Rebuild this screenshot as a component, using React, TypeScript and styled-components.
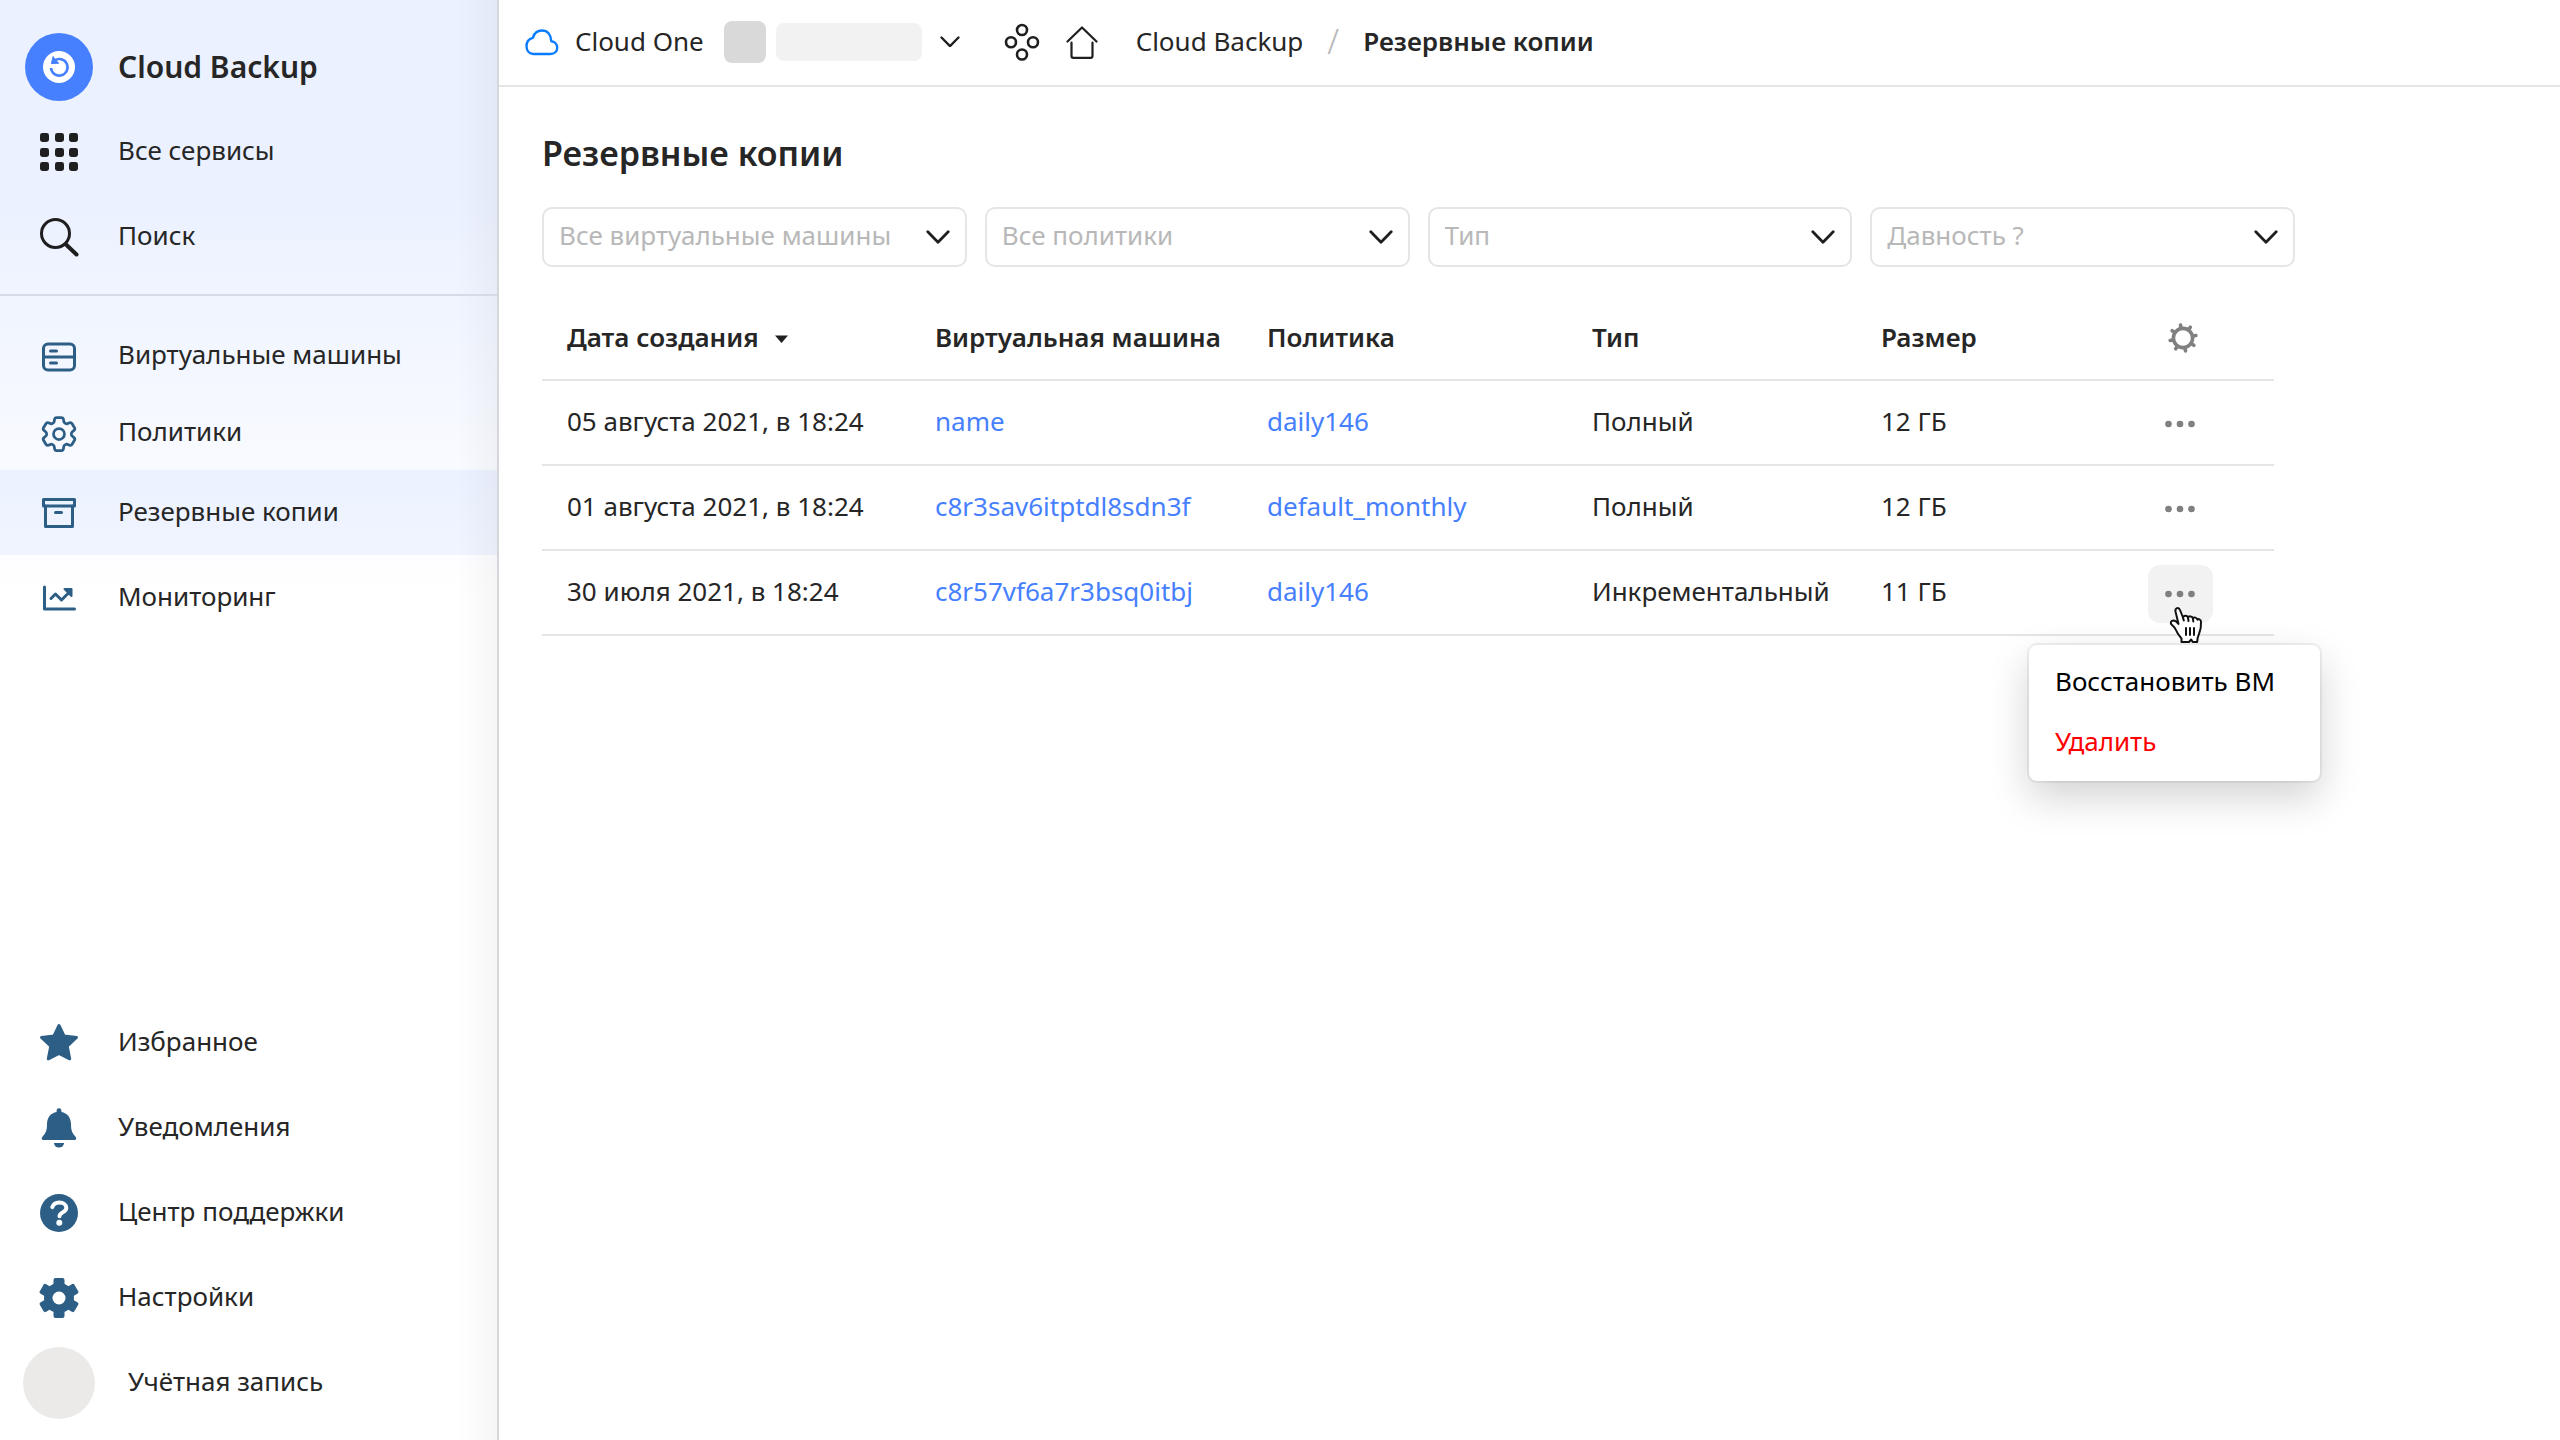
import React, { useState } from "react";
import styled, { createGlobalStyle, css } from "styled-components";
import { HiOutlineCog6Tooth } from "react-icons/hi2";

const color = {
  text: "#262626",
  strong: "#1f1f1f",
  steel: "#2d5f86",
  brand: "#4680ff",
  line: "#e5e5e5",
  muted: "#b8b8b8",
  gray: "#808080",
  danger: "#ff0000",
};

const GlobalStyle = createGlobalStyle`
  *, *::before, *::after { box-sizing: border-box; }
  body {
    margin: 0;
    background: #fff;
    color: ${color.text};
    font-family: "Noto Sans", "Open Sans", "Liberation Sans", sans-serif;
    font-size: 26px;
    line-height: 36px;
  }
  button, select { font: inherit; color: inherit; }
  svg { display: block; flex: none; }
`;

const Page = styled.div`
  display: flex;
  min-height: 100vh;
`;

/* Sidebar */

const Sidebar = styled.aside`
  display: flex;
  flex-direction: column;
  flex: none;
  width: 499px;
  border-right: 2px solid #d6d7db;
  background:
    linear-gradient(to left, rgba(0, 0, 0, 0.035), rgba(0, 0, 0, 0) 40px),
    linear-gradient(#ebf1ff 0, #ebf1ff 200px, #ffffff 600px);
`;

const SidebarGroup = styled.nav<{ $kind: "top" | "main" | "bottom" }>`
  display: flex;
  flex-direction: column;
  ${(p) => p.$kind === "top" && css`
    padding: 24px 0 15px;
    border-bottom: 2px solid #d5dae6;
  `}
  ${(p) => p.$kind === "main" && css`
    padding-top: 20px;
  `}
  ${(p) => p.$kind === "bottom" && css`
    margin-top: auto;
    padding-bottom: 15px;
  `}
`;

const NavItem = styled.a<{ $active?: boolean; $compact?: boolean }>`
  display: flex;
  align-items: center;
  height: ${(p) => (p.$compact ? 77 : 85)}px;
  color: ${color.text};
  text-decoration: none;
  background: ${(p) => (p.$active ? "rgba(70, 128, 255, 0.07)" : "none")};
`;

const NavLabel = styled.span<{ $compact?: boolean }>`
  padding-bottom: ${(p) => (p.$compact ? 1 : 4)}px;
`;

const IconSlot = styled.span<{ $wide?: boolean; $low?: boolean }>`
  display: flex;
  justify-content: center;
  flex: none;
  width: ${(p) => (p.$wide ? 128 : 118)}px;
  padding-right: ${(p) => (p.$wide ? 10 : 0)}px;
  padding-top: ${(p) => (p.$low ? 4 : 0)}px;
  color: ${color.steel};
`;

const Brand = styled.span`
  font-size: 30px;
  font-weight: 600;
  color: ${color.text};
`;

const Avatar = styled.span`
  width: 72px;
  height: 72px;
  border-radius: 50%;
  background: #ebeae9;
`;

/* Header */

const Main = styled.div`
  display: flex;
  flex-direction: column;
  flex: 1;
  min-width: 0;
`;

const Header = styled.header`
  display: flex;
  align-items: center;
  height: 87px;
  padding: 0 26px 2px;
  border-bottom: 2px solid ${color.line};
`;

const CloudLink = styled.a`
  display: flex;
  align-items: center;
  gap: 16px;
  color: ${color.text};
  text-decoration: none;
`;

const HeaderLabel = styled.span`
  padding-bottom: 2px;
`;

const FolderPicker = styled.button`
  display: flex;
  align-items: center;
  gap: 10px;
  margin-left: 20px;
  padding: 0;
  border: 0;
  background: none;
  cursor: pointer;
`;

const FolderBadge = styled.span`
  width: 42px;
  height: 42px;
  border-radius: 8px;
  background: #d9d9d9;
`;

const FolderName = styled.span`
  width: 146px;
  height: 38px;
  margin-right: 8px;
  border-radius: 8px;
  background: #f2f2f2;
`;

const HeaderIcons = styled.div`
  display: flex;
  align-items: center;
  gap: 26px;
  margin-left: 44px;
`;

const IconButton = styled.button`
  display: flex;
  padding: 0;
  border: 0;
  background: none;
  cursor: pointer;
`;

const Breadcrumbs = styled.nav`
  display: flex;
  align-items: center;
  gap: 24px;
  margin-left: 38px;
  padding-bottom: 2px;
`;

const Crumb = styled.a<{ $current?: boolean }>`
  color: ${color.text};
  font-weight: ${(p) => (p.$current ? 600 : 400)};
  text-decoration: none;
`;

const Slash = styled.span`
  font-size: 34px;
  font-weight: 300;
  color: ${color.muted};
`;

/* Content */

const Content = styled.main`
  padding: 42px 43px;
`;

const Title = styled.h1`
  margin: 0;
  font-size: 34px;
  line-height: 48px;
  font-weight: 600;
`;

const Filters = styled.form`
  display: grid;
  grid-template-columns: repeat(4, 1fr);
  gap: 18px;
  max-width: 1753px;
  margin-top: 30px;
`;

const Field = styled.label`
  display: grid;
  align-items: center;
  > * { grid-area: 1 / 1; }
`;

const Select = styled.select`
  width: 100%;
  height: 60px;
  padding: 0 50px 4px 15px;
  border: 2px solid ${color.line};
  border-radius: 10px;
  background: #fff;
  color: ${color.muted};
  appearance: none;
`;

const SelectArrow = styled.span`
  justify-self: end;
  margin-right: 17px;
  pointer-events: none;
`;

const Table = styled.table`
  width: 100%;
  max-width: 1732px;
  margin-top: 27px;
  border-collapse: collapse;
  table-layout: fixed;
`;

const Row = styled.tr`
  height: 85px;
  border-bottom: 2px solid ${color.line};
`;

const HeadCell = styled.th<{ $action?: boolean }>`
  height: 86px;
  padding: ${(p) => (p.$action ? 2 : 0)}px 0 0 25px;
  font-weight: 600;
  text-align: left;
  white-space: nowrap;
`;

const Cell = styled.td<{ $action?: boolean }>`
  padding: ${(p) => (p.$action ? "2px 0 0 25px" : "0 0 4px 25px")};
  white-space: nowrap;
`;

const SortButton = styled.button`
  display: flex;
  align-items: center;
  gap: 16px;
  padding: 0;
  border: 0;
  background: none;
  cursor: pointer;
`;

const TableLink = styled.a`
  color: ${color.brand};
  text-decoration: none;
`;

const Actions = styled.div`
  position: relative;
  width: 65px;
`;

const ActionButton = styled.button<{ $open?: boolean; $wide?: boolean }>`
  display: flex;
  align-items: center;
  justify-content: center;
  width: ${(p) => (p.$wide ? 70 : 65)}px;
  height: 58px;
  padding: 0;
  border: 0;
  border-radius: 12px;
  background: ${(p) => (p.$open ? "#f2f2f2" : "none")};
  color: ${color.gray};
  cursor: pointer;
`;

const Menu = styled.div`
  position: absolute;
  z-index: 1;
  top: 80px;
  right: -107px;
  display: flex;
  flex-direction: column;
  width: 291px;
  padding: 8px 0;
  border-radius: 8px;
  background: #fff;
  box-shadow: 0 0 0 2px rgba(0, 0, 0, 0.06), 0 16px 40px rgba(0, 0, 0, 0.18);
`;

const MenuItem = styled.button<{ $danger?: boolean }>`
  height: 60px;
  padding: 0 26px 4px;
  border: 0;
  background: none;
  color: ${(p) => (p.$danger ? color.danger : "#000")};
  text-align: left;
  cursor: pointer;
`;

const Pointer = styled.span`
  position: absolute;
  z-index: 2;
  top: 41px;
  left: 21px;
  pointer-events: none;
`;

/* Icons */

const BackupLogo = () => (
  <svg width="68" height="68" viewBox="0 0 68 68">
    <circle cx="34" cy="34" r="34" fill={color.brand} />
    <circle cx="34" cy="34" r="16" fill="#fff" />
    <path d="M26 35a8.3 8.3 0 1 0 3.4-7.4" fill="none" stroke={color.brand} strokeWidth="2.6" />
    <path d="M28.2 23.2 26.4 30.6 34 30.2" fill={color.brand} stroke={color.brand} strokeWidth="1" strokeLinejoin="round" />
  </svg>
);

const GridIcon = () => (
  <svg width="40" height="40" viewBox="0 0 40 40" fill={color.strong}>
    {[1, 16, 30].map((y) => [1, 16, 30].map((x) => (
      <rect key={`${x}-${y}`} x={x} y={y} width="9" height="9" rx="2.4" />
    )))}
  </svg>
);

const SearchIcon = () => (
  <svg width="40" height="40" viewBox="0 0 40 40" fill="none" stroke={color.strong} strokeWidth="3" strokeLinecap="round">
    <circle cx="16.5" cy="16.5" r="14" />
    <path d="M27 27.5 37.5 37.5" strokeWidth="4" />
  </svg>
);

const ServerIcon = () => (
  <svg width="36" height="32" viewBox="0 0 36 32" fill="none" stroke="currentColor" strokeWidth="3" strokeLinecap="round">
    <rect x="2.5" y="3" width="31" height="26" rx="4.5" />
    <path d="M2.5 16h31M9.5 10h6M9.5 22h6" />
  </svg>
);

const ArchiveIcon = () => (
  <svg width="36" height="32" viewBox="0 0 36 32" fill="none" stroke="currentColor" strokeWidth="3" strokeLinejoin="round" strokeLinecap="round">
    <rect x="2.5" y="2.5" width="31" height="6.5" />
    <path d="M4.5 9v20.5h27V9M14.500 15.500h6" />
  </svg>
);

const ChartIcon = () => (
  <svg width="36" height="30" viewBox="0 0 36 30" fill="none" stroke="currentColor" strokeWidth="3" strokeLinejoin="round" strokeLinecap="round">
    <path d="M3.500 4v22h30" />
    <path d="M10 15.500l4.500-4.500 6 6 8-8" />
    <path d="M23.500 6h7v7z" fill="currentColor" strokeWidth="2" />
  </svg>
);

const StarIcon = () => (
  <svg width="40" height="40" viewBox="0 0 40 40" fill="currentColor" stroke="currentColor" strokeWidth="3" strokeLinejoin="round">
    <path d="M20 2.500l5 10.500 12.500 1.500-9.300 8.600 2.500 12.700L20 30.300 9.300 35.800l2.500-12.700L2.500 14.500 15 13z" />
  </svg>
);

const BellIcon = () => (
  <svg width="40" height="40" viewBox="0 0 40 40" fill="currentColor">
    <path d="M17.600 2.600a2.400 2.400 0 0 1 4.800 0v1.300C28.300 5 32 9.600 32 16c0 7 1.600 9.600 4.300 12.400C38 30.200 37.300 32 35 32H5c-2.300 0-3-1.800-1.300-3.600C6.400 25.600 8 23 8 16 8 9.600 11.700 5 17.600 3.900z" />
    <path d="M15 35h10a5 4.500 0 0 1-10 0z" />
  </svg>
);

const HelpIcon = () => (
  <svg width="38" height="38" viewBox="0 0 38 38" fill="none">
    <circle cx="19" cy="19" r="19" fill="currentColor" />
    <path d="M12.300 13.200c1-3 3.500-4.700 7-4.700 4 0 7 2.200 7 5.400 0 4.600-6.800 4.300-6.800 8.300" stroke="#fff" strokeWidth="4" strokeLinecap="round" />
    <circle cx="19.300" cy="28.700" r="3" fill="#fff" />
  </svg>
);

const GearIcon = () => (
  <svg width="40" height="40" viewBox="-20 -20 40 40" fill="currentColor">
    <mask id="gear-hole">
      <rect x="-20" y="-20" width="40" height="40" fill="#fff" />
      <circle r="6.5" fill="#000" />
    </mask>
    <g mask="url(#gear-hole)">
      <circle r="15" />
      {[0, 60, 120].map((a) => (
        <rect key={a} x="-5.5" y="-20" width="11" height="40" rx="2" transform={`rotate(${a})`} />
      ))}
    </g>
  </svg>
);

const CloudIcon = () => (
  <svg width="34" height="28" viewBox="0 0 34 28" fill="none" stroke="#0a7cff" strokeWidth="2.4" strokeLinejoin="round">
    <path d="M8.500 26h17c4 0 6.700-2.700 6.700-6.200 0-3.600-2.500-6.100-5.900-6.500C26 6.500 22.300 2.500 17 2.500c-4.500 0-7.700 2.500-9.200 7.300C4.200 10.700 1.500 13.700 1.500 18c0 4.700 2.900 8 7 8z" />
  </svg>
);

const Chevron = ({ width }: { width: number }) => (
  <svg width={width} viewBox="0 0 24 14" fill="none" stroke={color.strong} strokeWidth="2.8" strokeLinecap="round" strokeLinejoin="round">
    <path d="M1.800 1.800 12 12.200 22.200 1.800" />
  </svg>
);

const ServicesIcon = () => (
  <svg width="36" height="38" viewBox="0 0 36 38" fill="none" stroke={color.strong} strokeWidth="2.6">
    <circle cx="18" cy="7" r="5" />
    <circle cx="18" cy="31.500" r="5" />
    <circle cx="7" cy="19.300" r="5" />
    <circle cx="29" cy="19.300" r="5" />
  </svg>
);

const HomeIcon = () => (
  <svg width="32" height="34" viewBox="0 0 32 34" fill="none" stroke={color.strong} strokeWidth="2.2" strokeLinecap="round" strokeLinejoin="round">
    <path d="M1.500 16.500 16 2.500l14.500 14" />
    <path d="M5.500 17.500V31c0 1 .8 1.800 1.800 1.800h17.400c1 0 1.800-.8 1.800-1.800V17.500" />
  </svg>
);

const SortIcon = () => (
  <svg width="13" height="12" viewBox="0 0 13 12" fill={color.strong}>
    <path d="M0 4.500h13L6.500 12z" />
  </svg>
);

const SunGearIcon = () => (
  <svg width="30" height="30" viewBox="-15 -15 30 30" fill="none" stroke={color.gray} strokeWidth="3.6" strokeLinecap="round">
    <circle r="9.600" />
    {[0, 45, 90, 135, 180, 225, 270, 315].map((a) => (
      <path key={a} d="M0-10.500v-2.600" transform={`rotate(${a - 11})`} />
    ))}
  </svg>
);

const DotsIcon = () => (
  <svg width="32" height="8" viewBox="0 0 32 8" fill="currentColor">
    <circle cx="3.500" cy="4" r="3.300" />
    <circle cx="15" cy="4" r="3.300" />
    <circle cx="26.500" cy="4" r="3.300" />
  </svg>
);

const HandIcon = () => (
  <svg width="34" height="38" viewBox="0 0 34 38" fill="#fff" stroke="#111" strokeWidth="2" strokeLinejoin="round" strokeLinecap="round">
    <path d="M12.500 36v-3.500c-2-2.500-4-4.500-5-7.500-1-2.500-2.500-4.500-5-6.500-1.500-1.500-.5-4 2-4 2 0 3.500 1.500 5 3.500L6.500 5.500C5.800 2 9.800.5 11 4l3 7.500c.5-2.500 4.500-2.500 5 .2.800-2 4.300-1.700 4.800.6 1-1.500 4-.8 4.700 1.500.8-1.300 3.300-.5 3.500 1.700.3 5-.5 9-2 12.500-1 2.500-1.800 4-1.800 8h-4.500l-1.500-2.500-2.200 2.500z" />
    <path d="M14 11.500l.8 3M19 12l.5 3M24 13l.3 2.500M17 22v7M21 22v7M25 22v7" fill="none" />
  </svg>
);

/* Data */

const filters = ["Все виртуальные машины", "Все политики", "Тип", "Давность ?"];

const columnWidths = [368, 332, 325, 289, 267, 151];

const backups = [
  { date: "05 августа 2021, в 18:24", vm: "name", policy: "daily146", type: "Полный", size: "12 ГБ" },
  { date: "01 августа 2021, в 18:24", vm: "c8r3sav6itptdl8sdn3f", policy: "default_monthly", type: "Полный", size: "12 ГБ" },
  { date: "30 июля 2021, в 18:24", vm: "c8r57vf6a7r3bsq0itbj", policy: "daily146", type: "Инкрементальный", size: "11 ГБ" },
];

const mainNav = [
  { label: "Виртуальные машины", icon: <ServerIcon />, compact: true },
  { label: "Политики", icon: <HiOutlineCog6Tooth size={44} />, compact: true },
  { label: "Резервные копии", icon: <ArchiveIcon />, active: true },
  { label: "Мониторинг", icon: <ChartIcon /> },
];

const bottomNav = [
  { label: "Избранное", icon: <StarIcon /> },
  { label: "Уведомления", icon: <BellIcon /> },
  { label: "Центр поддержки", icon: <HelpIcon /> },
  { label: "Настройки", icon: <GearIcon /> },
];

export default function App() {
  const [openRow, setOpenRow] = useState<number | null>(2);

  return (
    <>
      <GlobalStyle />
      <Page>
        <Sidebar>
          <SidebarGroup $kind="top">
            <NavItem href="#">
              <IconSlot><BackupLogo /></IconSlot>
              <Brand>Cloud Backup</Brand>
            </NavItem>
            <NavItem href="#">
              <IconSlot><GridIcon /></IconSlot>
              <NavLabel>Все сервисы</NavLabel>
            </NavItem>
            <NavItem href="#">
              <IconSlot><SearchIcon /></IconSlot>
              <NavLabel>Поиск</NavLabel>
            </NavItem>
          </SidebarGroup>
          <SidebarGroup $kind="main">
            {mainNav.map((item) => (
              <NavItem key={item.label} href="#" $compact={item.compact} $active={item.active}>
                <IconSlot $low={item.compact}>{item.icon}</IconSlot>
                <NavLabel $compact={item.compact}>{item.label}</NavLabel>
              </NavItem>
            ))}
          </SidebarGroup>
          <SidebarGroup $kind="bottom">
            {bottomNav.map((item) => (
              <NavItem key={item.label} href="#">
                <IconSlot>{item.icon}</IconSlot>
                <NavLabel>{item.label}</NavLabel>
              </NavItem>
            ))}
            <NavItem href="#">
              <IconSlot $wide><Avatar /></IconSlot>
              <NavLabel>Учётная запись</NavLabel>
            </NavItem>
          </SidebarGroup>
        </Sidebar>

        <Main>
          <Header>
            <CloudLink href="#">
              <CloudIcon />
              <HeaderLabel>Cloud One</HeaderLabel>
            </CloudLink>
            <FolderPicker aria-label="Каталог">
              <FolderBadge />
              <FolderName />
              <Chevron width={20} />
            </FolderPicker>
            <HeaderIcons>
              <IconButton aria-label="Сервисы"><ServicesIcon /></IconButton>
              <IconButton aria-label="Домой"><HomeIcon /></IconButton>
            </HeaderIcons>
            <Breadcrumbs>
              <Crumb href="#">Cloud Backup</Crumb>
              <Slash>/</Slash>
              <Crumb href="#" $current>Резервные копии</Crumb>
            </Breadcrumbs>
          </Header>

          <Content>
            <Title>Резервные копии</Title>
            <Filters>
              {filters.map((name) => (
                <Field key={name}>
                  <Select aria-label={name}>
                    <option>{name}</option>
                  </Select>
                  <SelectArrow><Chevron width={24} /></SelectArrow>
                </Field>
              ))}
            </Filters>

            <Table>
              <colgroup>
                {columnWidths.map((w, i) => <col key={i} width={w} />)}
              </colgroup>
              <thead>
                <Row>
                  <HeadCell>
                    <SortButton>Дата создания <SortIcon /></SortButton>
                  </HeadCell>
                  <HeadCell>Виртуальная машина</HeadCell>
                  <HeadCell>Политика</HeadCell>
                  <HeadCell>Тип</HeadCell>
                  <HeadCell>Размер</HeadCell>
                  <HeadCell $action>
                    <ActionButton $wide aria-label="Настройки таблицы"><SunGearIcon /></ActionButton>
                  </HeadCell>
                </Row>
              </thead>
              <tbody>
                {backups.map((b, i) => (
                  <Row key={b.date}>
                    <Cell>{b.date}</Cell>
                    <Cell><TableLink href="#">{b.vm}</TableLink></Cell>
                    <Cell><TableLink href="#">{b.policy}</TableLink></Cell>
                    <Cell>{b.type}</Cell>
                    <Cell>{b.size}</Cell>
                    <Cell $action>
                      <Actions>
                        <ActionButton
                          aria-label="Действия"
                          $open={openRow === i}
                          onClick={() => setOpenRow(openRow === i ? null : i)}
                        >
                          <DotsIcon />
                        </ActionButton>
                        {openRow === i && (
                          <>
                            <Menu>
                              <MenuItem>Восстановить ВМ</MenuItem>
                              <MenuItem $danger>Удалить</MenuItem>
                            </Menu>
                            <Pointer><HandIcon /></Pointer>
                          </>
                        )}
                      </Actions>
                    </Cell>
                  </Row>
                ))}
              </tbody>
            </Table>
          </Content>
        </Main>
      </Page>
    </>
  );
}
